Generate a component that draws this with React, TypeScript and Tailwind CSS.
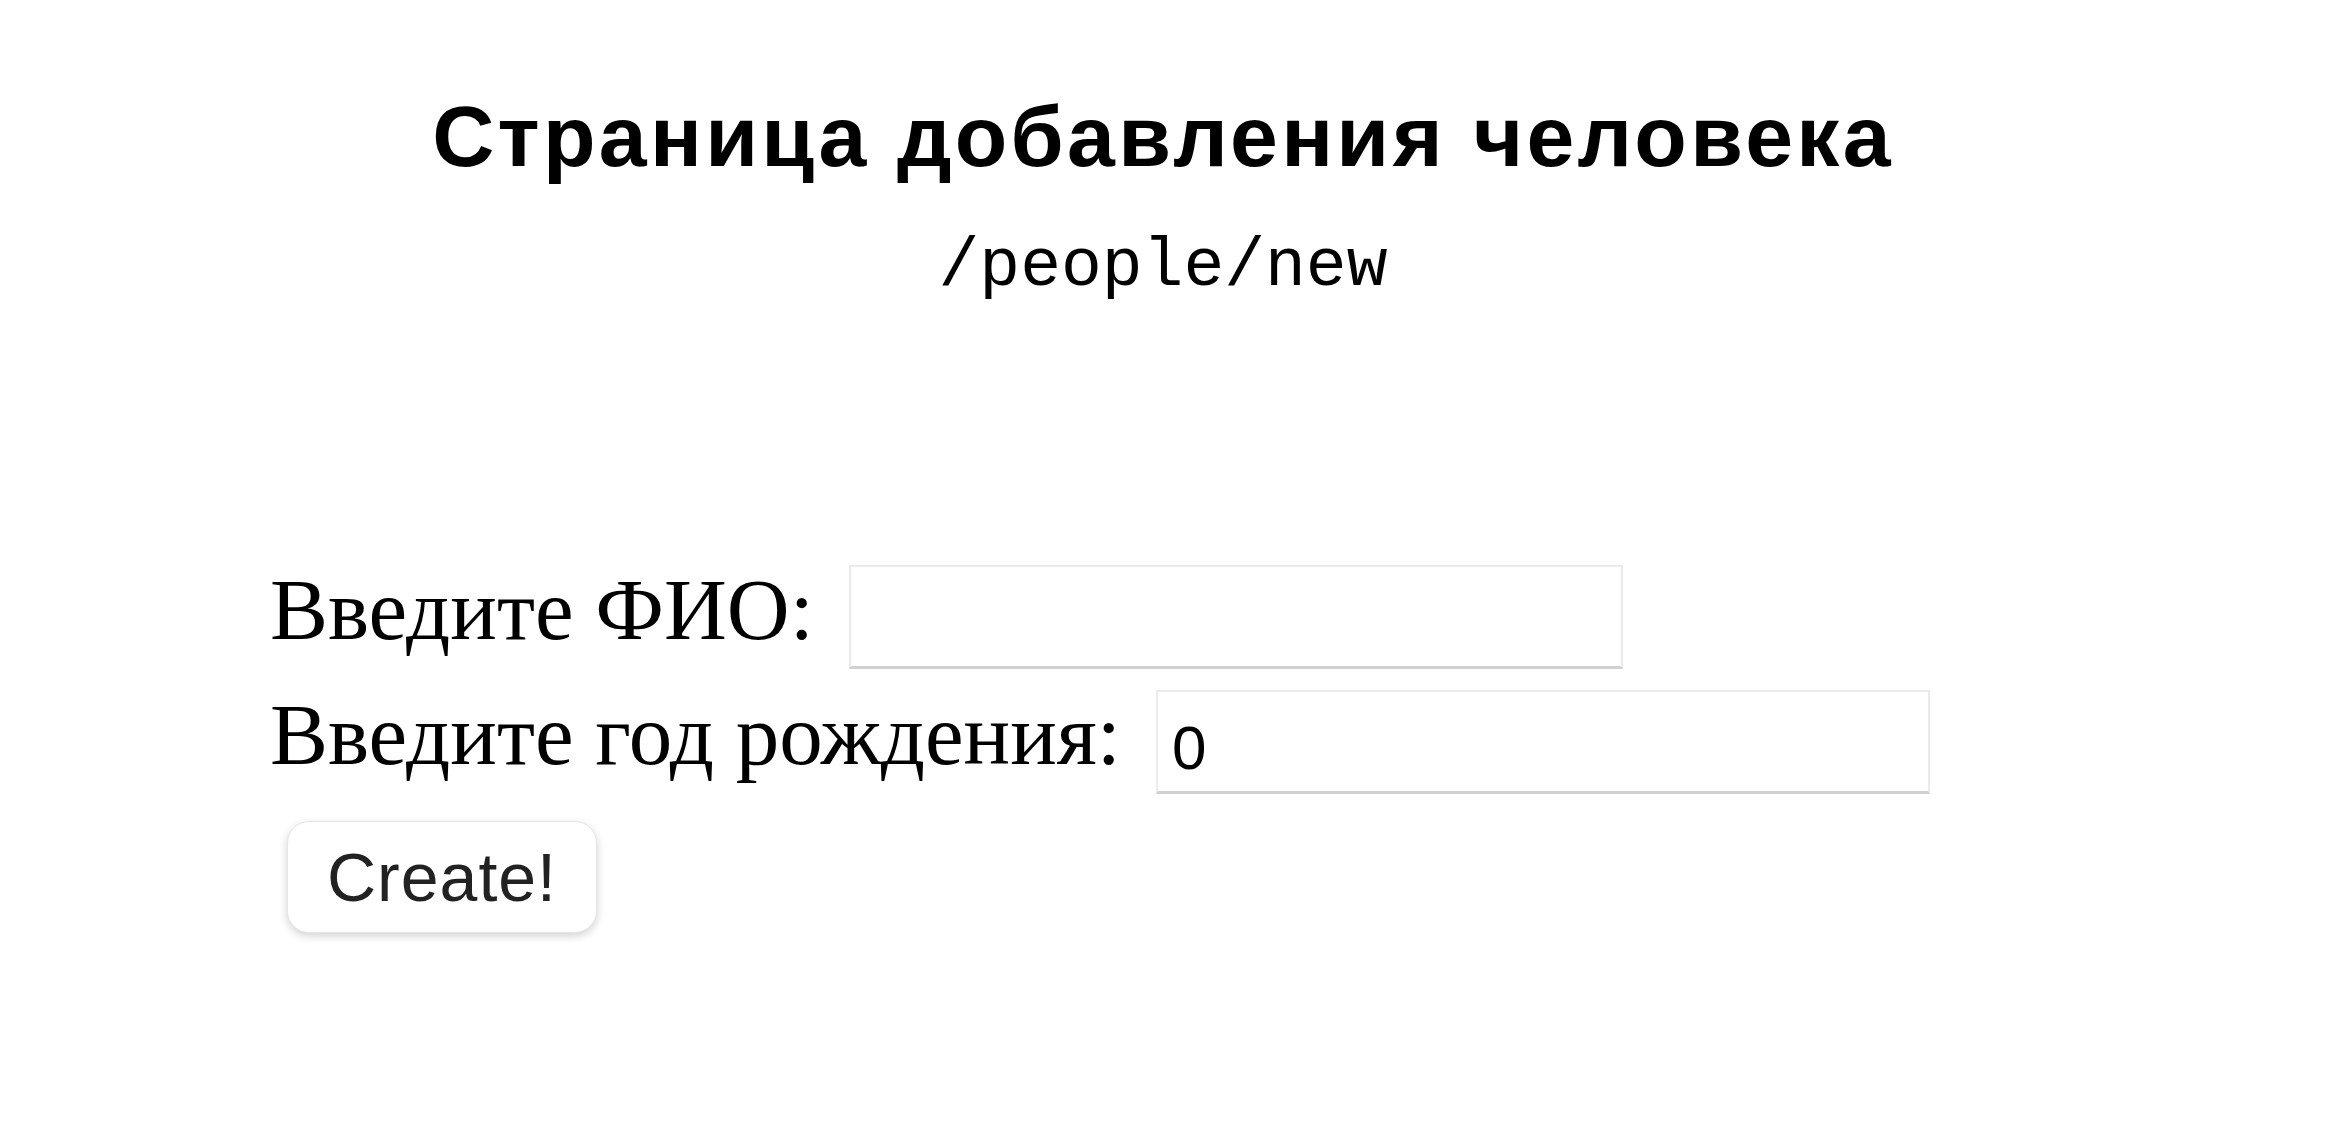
export default function App() {
  return (
    <div className="min-h-screen bg-white text-black">
      {/* header */}
      <div className="flex flex-col items-center">
        <h1 className="mt-[93px] text-[86px] leading-[86px] tracking-[3.3px] font-bold font-['Liberation_Sans',Arial,sans-serif]">
          Страница добавления человека
        </h1>
        <p className="mt-[54px] text-[68px] leading-[68px] font-['Liberation_Mono','Courier_New',monospace]">
          /people/new
        </p>
      </div>

      {/* form */}
      <form className="mt-[264px] ml-[270px] flex flex-col">
        <div className="flex items-start gap-[35px]">
          <label className="mt-[1px] text-[87px] leading-[88px] font-['Liberation_Serif','Times_New_Roman',serif]">
            Введите ФИО:
          </label>
          <input
            type="text"
            className="w-[774px] h-[104px] border-2 border-[#ebebeb] border-b-[3px] border-b-[#d0d0d0] bg-white pl-[14px] pt-[12px] text-[62px] outline-none font-['Liberation_Sans',Arial,sans-serif]"
          />
        </div>
        <div className="mt-[21px] flex items-start gap-[35px]">
          <label className="mt-[1px] text-[87px] leading-[88px] font-['Liberation_Serif','Times_New_Roman',serif]">
            Введите год рождения:
          </label>
          <input
            type="text"
            defaultValue="0"
            className="w-[774px] h-[104px] border-2 border-[#ebebeb] border-b-[3px] border-b-[#d0d0d0] bg-white pl-[14px] pt-[12px] text-[62px] text-black outline-none font-['Liberation_Sans',Arial,sans-serif]"
          />
        </div>
        <div className="mt-[27px] ml-[17px]">
          <button
            type="button"
            className="w-[310px] h-[112px] rounded-[22px] border border-[#e6e6e6] bg-white text-[68px] leading-none tracking-[1px] text-[#222] shadow-[0_3px_8px_rgba(0,0,0,0.18)] font-['Liberation_Sans',Arial,sans-serif]"
          >
            Create!
          </button>
        </div>
      </form>
    </div>
  );
}
